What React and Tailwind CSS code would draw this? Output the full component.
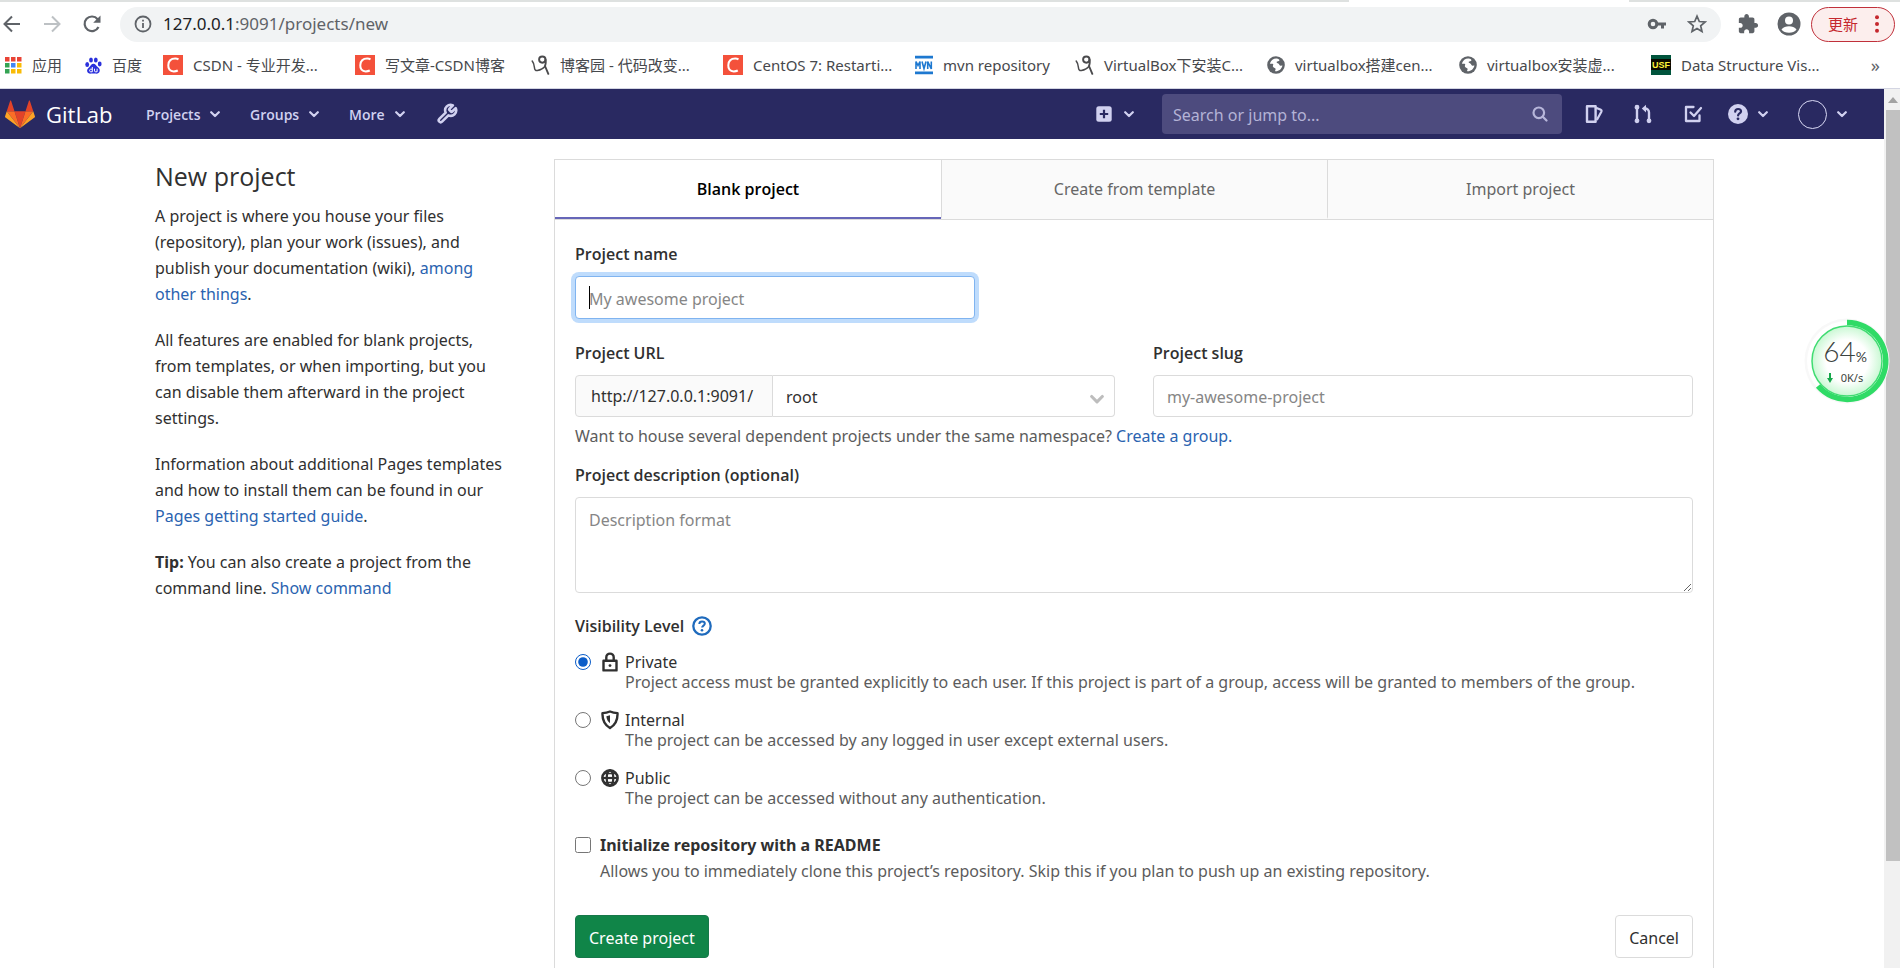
import React from "react";

function AppsIcon() {
  const colors = ["#e94335", "#e94335", "#e94335", "#34a353", "#4285f4", "#f9bb06", "#34a353", "#f9bb06", "#f9bb06"];
  return (
    <svg viewBox="0 0 17 17" className="h-[17px] w-[17px] shrink-0" aria-hidden="true">
      {colors.map((c, i) => (
        <rect key={i} x={(i % 3) * 6} y={Math.floor(i / 3) * 6} width="4.500" height="4.500" fill={c} />
      ))}
    </svg>
  );
}

function PawIcon() {
  return (
    <svg viewBox="0 0 17 17" className="h-[17px] w-[17px] shrink-0" fill="#2a30dc" aria-hidden="true">
      <ellipse cx="2.2" cy="7.4" rx="1.9" ry="2.5" />
      <ellipse cx="6" cy="3" rx="1.9" ry="2.6" />
      <ellipse cx="10.8" cy="3" rx="1.9" ry="2.6" />
      <ellipse cx="14.7" cy="7" rx="1.9" ry="2.4" />
      <path d="M8.4 6.8c2 0 2.5 1.6 4 3 1.700 1.500 2.600 2.400 2.300 4.300-.4 2.400-2.400 2.700-4.200 2.500-1.500-.1-2.700-.1-4.200 0-2 .2-3.900-.3-4.200-2.500-.2-1.900.9-2.900 2.400-4.200 1.500-1.400 1.900-3.100 3.900-3.100z" />
      <path d="M7.300 10v4.800H5.600q-1-.2-1-1.300t1-1.300h1.700M9.500 11.700v2.200q.1.900 1 .9h1.600v-3.100" fill="none" stroke="#fff" strokeWidth="1" />
    </svg>
  );
}

function CIcon() {
  return (
    <span aria-hidden="true" className="flex h-5 w-5 shrink-0 items-center justify-center bg-[#f4513b]">
      <svg viewBox="0 0 20 20" className="h-5 w-5" fill="none" stroke="#fff" strokeWidth="2">
        <path d="M15.500 4.400c-1-.6-2-.8-3.300-.8-4.400 0-6.700 2.800-6.900 6.600-.2 3.700 1.700 6.200 5.400 6.200 1.600 0 2.900-.3 4.100-.9" />
      </svg>
    </span>
  );
}

function BlogIcon() {
  return (
    <svg viewBox="0 0 19 20" className="h-5 w-[19px] shrink-0" fill="none" stroke="#4a4a4c" strokeLinecap="round" strokeLinejoin="round" aria-hidden="true">
      <path d="M1.200 6c1.500 1.800 2 3.800 2.200 6.200.2 2.600 1.200 3.600 3 3.300 3.400-.5 6.200-2.300 8-4.700" strokeWidth="1.500" />
      <ellipse cx="11.300" cy="4.600" rx="3.200" ry="3.100" strokeWidth="1.900" />
      <path d="M14.500 4.500c.5 2.500.3 4.500-.5 6.500l3.300 7.800" strokeWidth="1.900" />
    </svg>
  );
}

function MvnIcon() {
  return (
    <svg viewBox="0 0 18 20" className="h-5 w-[18px] shrink-0" aria-hidden="true">
      <path d="M0 2.200h18M0 17.800h18" stroke="#1d78d0" strokeWidth="2.800" />
      <path d="M1 14V6.500l2 4 2-4V14M7 6.500l2 7 2-7M12.700 14V6.500l3.600 7.500V6.500" fill="none" stroke="#1d78d0" strokeWidth="1.600" />
    </svg>
  );
}

function GlobeMark() {
  return (
    <svg viewBox="0 0 18 18" className="h-[18px] w-[18px] shrink-0" aria-hidden="true">
      <circle cx="9" cy="9" r="8.800" fill="#5f6368" />
      <path d="M8 2.200c2.300-.3 3.500.4 3.400 1.400-.2 1.200-2 1-2.400 2-.3.900.8 1.100 2 1.200 1.300.2 1.100 1.500 2.300 1.700.9.100 1.600-.2 2.500-.6.200 3.700-2 7-5.900 7.800-.9-.6.300-1.800-.3-2.700-.8-1.100-2.700-.6-3.400-1.700-.6-1 .5-1.900-.5-2.500-1-.5-2 .7-3.400.2.300-3.400 2.400-6.200 5.700-6.800z" fill="#fff" transform="rotate(14 9 9) translate(.5 .5) scale(.94)" />
    </svg>
  );
}

function UsfIcon() {
  return (
    <svg viewBox="0 0 20 20" className="h-5 w-5 shrink-0" aria-hidden="true">
      <rect width="20" height="20" fill="#00543c" />
      <rect y="4" width="20" height="11" fill="#0a0a00" />
      <text x="10" y="13" textAnchor="middle" fontFamily="Liberation Sans" fontSize="9" fontWeight="700" fill="#fff33a">USF</text>
    </svg>
  );
}

const bookmarks = [
  { label: "应用", icon: <AppsIcon />, w: "w-[80px]" },
  { label: "百度", icon: <PawIcon />, w: "w-[78px]" },
  { label: "CSDN - 专业开发...", icon: <CIcon />, w: "w-[192px]" },
  { label: "写文章-CSDN博客", icon: <CIcon />, w: "w-[176px]" },
  { label: "博客园 - 代码改变...", icon: <BlogIcon />, w: "w-[192px]" },
  { label: "CentOS 7: Restarti...", icon: <CIcon />, w: "w-[192px]" },
  { label: "mvn repository", icon: <MvnIcon />, w: "w-[160px]" },
  { label: "VirtualBox下安装C...", icon: <BlogIcon />, w: "w-[192px]" },
  { label: "virtualbox搭建cen...", icon: <GlobeMark />, w: "w-[192px]" },
  { label: "virtualbox安装虚...", icon: <GlobeMark />, w: "w-[192px]" },
  { label: "Data Structure Vis...", icon: <UsfIcon />, w: "w-[192px]" },
];

function BrowserBar() {
  return (
    <div className="border-b border-[#d3d5e2] bg-white pb-[2px] text-[#5f6368]">
      <div className="flex h-[2px] bg-[#dee1e0]">
        <div className="ml-[71%] w-[280px] bg-white" />
      </div>
      <div className="flex h-[42px] items-center pt-[2px]">
        <div className="flex w-[120px] shrink-0 items-center gap-5 pl-[2px]">
          <button type="button" aria-label="Back">
            <svg viewBox="0 0 20 20" className="h-5 w-5" fill="none" stroke="#5f6368" strokeWidth="2">
              <path d="M18 10H3M10 2.500L2.500 10l7.500 7.500" />
            </svg>
          </button>
          <button type="button" aria-label="Forward">
            <svg viewBox="0 0 20 20" className="h-5 w-5" fill="none" stroke="#bdc1c4" strokeWidth="2">
              <path d="M2 10h15M10 2.500l7.500 7.500-7.500 7.500" />
            </svg>
          </button>
          <button type="button" aria-label="Reload">
            <svg viewBox="0 0 20 20" className="h-5 w-5" fill="none" stroke="#5f6368" strokeWidth="2.200">
              <path d="M16.500 13A7.300 7.300 0 1 1 15.600 5.200" />
              <path d="M18.500 1.500v7.300h-7.300z" fill="#5f6368" stroke="none" />
            </svg>
          </button>
        </div>
        <div className="flex h-[35px] flex-1 items-center rounded-full bg-[#f1f3f4] pr-[14px] pl-[14px]">
          <svg viewBox="0 0 18 18" className="h-[18px] w-[18px] shrink-0" fill="none" stroke="#5f6368" strokeWidth="1.800" aria-hidden="true">
            <circle cx="9" cy="9" r="7.500" />
            <path d="M9 8v5M9 4.800v1.800" />
          </svg>
          <span className="ml-[11px] flex-1 text-[17px]">
            <span className="text-[#202124]">127.0.0.1</span>:9091/projects/new
          </span>
          <svg viewBox="0 0 20 14" className="mr-[20px] h-[14px] w-5" fill="none" stroke="#5f6368" strokeWidth="3" aria-hidden="true">
            <circle cx="6" cy="7" r="3.800" />
            <path d="M10 7h9M15.500 7v4.500" />
          </svg>
          <svg viewBox="0 0 20 20" className="h-5 w-5" fill="none" stroke="#5f6368" strokeWidth="1.700" aria-hidden="true">
            <path d="M10 2.200l2.300 5.300 5.800.5-4.400 3.800 1.300 5.700-5-3-5 3 1.300-5.700-4.400-3.800 5.800-.5z" />
          </svg>
        </div>
        <div className="flex shrink-0 items-center gap-[18px] pr-[5px] pl-[16px]">
          <svg viewBox="0 0 24 24" className="h-[22px] w-[22px]" fill="#5f6368" aria-hidden="true">
            <path d="M20.500 11H19V7c0-1.100-.9-2-2-2h-4V3.500C13 2.120 11.880 1 10.500 1S8 2.120 8 3.500V5H4c-1.100 0-1.990.9-1.990 2v3.800H3.500c1.490 0 2.700 1.210 2.700 2.700s-1.210 2.700-2.700 2.700H2V20c0 1.100.9 2 2 2h3.800v-1.500c0-1.490 1.210-2.700 2.700-2.700 1.490 0 2.700 1.210 2.700 2.700V22H17c1.100 0 2-.9 2-2v-4h1.500c1.380 0 2.500-1.120 2.500-2.500S21.880 11 20.500 11z" />
          </svg>
          <svg viewBox="0 0 24 24" className="h-6 w-6" aria-hidden="true">
            <circle cx="12" cy="12" r="11.500" fill="#5f6368" />
            <circle cx="12" cy="8.500" r="4" fill="#fff" />
            <path d="M4.500 17.500c1.600-2.300 4.500-3.300 7.500-3.300s5.900 1 7.500 3.300c-1.600 2.200-4.300 3.300-7.500 3.300s-5.900-1.100-7.500-3.300z" fill="#fff" />
          </svg>
          <button type="button" className="-ml-2 flex h-[35px] w-[84px] items-center justify-between rounded-full border border-[#c0303a] bg-[#fceeed] pr-[15px] pl-[16px] text-[15px] text-[#c5282e]">
            更新
            <svg viewBox="0 0 4 18" className="h-[18px] w-1" fill="#c5282e" aria-hidden="true">
              <circle cx="2" cy="2.200" r="2" />
              <circle cx="2" cy="9" r="2" />
              <circle cx="2" cy="15.800" r="2" />
            </svg>
          </button>
        </div>
      </div>
      <nav aria-label="Bookmarks" className="flex h-[42px] items-center pr-5 pl-[5px]">
        {bookmarks.map((b) => (
          <a key={b.label} href="#" className={`flex shrink-0 items-center gap-[10px] text-[15px] whitespace-nowrap text-[#46484c] ${b.w}`}>
            {b.icon}
            <span>{b.label}</span>
          </a>
        ))}
        <span className="ml-auto text-[18px] leading-5">»</span>
      </nav>
    </div>
  );
}

function Chevron({ className = "h-[10px] w-[10px]" }) {
  return (
    <svg viewBox="0 0 10 10" className={className} fill="none" stroke="currentColor" strokeWidth="2.200" strokeLinecap="round" strokeLinejoin="round" aria-hidden="true">
      <path d="M1.200 3.200L5 7l3.800-3.800" />
    </svg>
  );
}

function HeaderNav() {
  return (
    <header className="flex h-[50px] items-center bg-[#292961] pr-[37px] pl-[5px] text-[#d1d1f0]">
      <a href="#" className="flex w-[141px] items-center gap-[11px] font-['Open_Sans'] text-[22px] text-white">
        <svg viewBox="0 0 36 34" className="h-[29px] w-[30px]" aria-hidden="true">
          <path fill="#e24329" d="M18 33.500L24.600 13H11.400z" />
          <path fill="#fc6d26" d="M18 33.500L11.400 13H2.100z" />
          <path fill="#fca326" d="M2.100 13L.1 19.200c-.2.600 0 1.200.5 1.500L18 33.500z" />
          <path fill="#e24329" d="M2.100 13h9.300L7.400.8C7.200.1 6.300.1 6.100.8z" />
          <path fill="#fc6d26" d="M18 33.500L24.600 13h9.300z" />
          <path fill="#fca326" d="M33.900 13l2 6.200c.2.600 0 1.200-.5 1.500L18 33.500z" />
          <path fill="#e24329" d="M33.900 13h-9.300l4-12.200c.2-.7 1.100-.7 1.300 0z" />
        </svg>
        GitLab
      </a>
      <nav aria-label="Main" className="flex items-center font-['Open_Sans'] text-[14px] font-semibold">
        <button type="button" className="flex w-[104px] items-center gap-[10px]">Projects <Chevron /></button>
        <button type="button" className="flex w-[99px] items-center gap-[10px]">Groups <Chevron /></button>
        <button type="button" className="flex w-[87px] items-center gap-[10px]">More <Chevron /></button>
        <button type="button" aria-label="Admin Area">
          <svg viewBox="0 0 24 24" className="h-[22px] w-[22px]" fill="none" stroke="currentColor" strokeWidth="2.800" strokeLinejoin="round">
            <path d="M14.700 6.300a1 1 0 0 0 0 1.400l1.600 1.600a1 1 0 0 0 1.400 0l3.770-3.770a6 6 0 0 1-7.940 7.940l-6.910 6.910a2.120 2.120 0 0 1-3-3l6.910-6.910a6 6 0 0 1 7.940-7.940z" />
          </svg>
        </button>
      </nav>
      <div className="ml-auto flex items-center">
        <button type="button" aria-label="New" className="mr-7 flex items-center gap-3">
          <svg viewBox="0 0 16 16" className="h-4 w-4" aria-hidden="true">
            <rect x=".3" y=".3" width="15.400" height="15.400" rx="2.500" fill="currentColor" />
            <path d="M8 3.800v8.400M3.800 8h8.400" stroke="#292961" strokeWidth="2.200" />
          </svg>
          <Chevron />
        </button>
        <label className="flex h-10 w-[400px] items-center rounded bg-[#4d4b7e] pr-[14px] pl-[11px]">
          <input aria-label="Search or jump to" placeholder="Search or jump to..." className="min-w-0 flex-1 bg-transparent pt-[2px] text-base outline-none placeholder:text-[#b4b3d6]" />
          <svg viewBox="0 0 16 16" className="h-4 w-4" fill="none" stroke="#b7b6da" strokeWidth="2.200" strokeLinecap="round" aria-hidden="true">
            <circle cx="6.800" cy="6.800" r="5.300" />
            <path d="M10.800 10.800l3.700 3.700" />
          </svg>
        </label>
        <a href="#" aria-label="Issues" className="ml-[22px]">
          <svg viewBox="0 0 20 20" className="h-5 w-5" fill="none" stroke="currentColor" strokeWidth="2.400" strokeLinejoin="round">
            <path d="M3 2.200h8.600v15.600H3z" />
            <path d="M12 3.700l4.800 2.100c.8.400 1 1 .7 1.700l-4.700 8.500" strokeWidth="2.200" />
          </svg>
        </a>
        <a href="#" aria-label="Merge requests" className="ml-[29px]">
          <svg viewBox="0 0 20 20" className="h-5 w-5" fill="none" stroke="currentColor" strokeWidth="2.400">
            <path d="M4 3v14M16 17V8.500c0-2.600-1.500-4-4.500-4" />
            <circle cx="4" cy="3.200" r="1.800" fill="currentColor" strokeWidth="1.200" />
            <circle cx="4" cy="16.800" r="1.800" fill="currentColor" strokeWidth="1.200" />
            <circle cx="16" cy="16.800" r="1.800" fill="currentColor" strokeWidth="1.200" />
            <path d="M13 .8v7.600L8.800 4.600z" fill="currentColor" stroke="none" />
          </svg>
        </a>
        <a href="#" aria-label="To-Do List" className="ml-[30px]">
          <svg viewBox="0 0 20 20" className="h-5 w-5" fill="none" stroke="currentColor" strokeWidth="2.300" strokeLinecap="round" strokeLinejoin="round">
            <path d="M10.500 3H3v14h13.500v-5.500" />
            <path d="M7.500 8.500l3.500 3.500 7-8" />
          </svg>
        </a>
        <button type="button" aria-label="Help" className="ml-[25px] flex items-center gap-[10px]">
          <svg viewBox="0 0 20 20" className="h-5 w-5" aria-hidden="true">
            <circle cx="10" cy="10" r="10" fill="currentColor" />
            <path d="M7.200 7.700C7.300 6 8.500 5 10.100 5c1.700 0 2.900.9 2.900 2.400 0 2-2.900 2.100-2.900 4" fill="none" stroke="#292961" strokeWidth="2.200" strokeLinecap="round" />
            <circle cx="10" cy="14.800" r="1.400" fill="#292961" />
          </svg>
          <Chevron />
        </button>
        <button type="button" aria-label="Account" className="ml-[30px] flex items-center gap-[10px]">
          <span className="h-[29px] w-[29px] rounded-full border border-[#d8d8f4]" />
          <Chevron />
        </button>
      </div>
    </header>
  );
}

function Link({ children }) {
  return <a href="#" className="text-[#2a63b0]">{children}</a>;
}

function Sidebar() {
  return (
    <aside className="w-[399px] shrink-0 pr-11 text-base leading-[26px]">
      <h1 className="mb-[10px] font-['Open_Sans'] text-[25px] leading-[34px] font-medium">New project</h1>
      <div className="space-y-5">
        <p>
          A project is where you house your files (repository), plan your work (issues), and publish your documentation (wiki), <Link>among other things</Link>.
        </p>
        <p>
          All features are enabled for blank projects, from templates, or when importing, but you can disable them afterward in the project settings.
        </p>
        <p>
          Information about additional Pages templates and how to install them can be found in our <Link>Pages getting started guide</Link>.
        </p>
        <p>
          <b>Tip:</b> You can also create a project from the command line. <Link>Show command</Link>
        </p>
      </div>
    </aside>
  );
}

function LockIcon() {
  return (
    <svg viewBox="0 0 16 20" className="h-5 w-4" fill="none" stroke="#303030" strokeWidth="2.400" aria-hidden="true">
      <path d="M1.500 8.800h13v9.600h-13z" strokeLinejoin="round" />
      <path d="M4.300 8.500V5.300a3.700 3.700 0 0 1 7.400 0v3.200" />
      <circle cx="8" cy="13.600" r="1.400" fill="#303030" stroke="none" />
    </svg>
  );
}

function ShieldIcon() {
  return (
    <svg viewBox="0 0 18 20" className="h-5 w-[18px]" aria-hidden="true">
      <path d="M9 1.500c2.300 1 4.700 1.500 7.500 1.600.3 6.400-2 11.600-7.500 15-5.500-3.400-7.800-8.600-7.500-15C4.300 3 6.700 2.500 9 1.500z" fill="none" stroke="#303030" strokeWidth="2.400" strokeLinejoin="round" />
      <path d="M9 5.200v8C6.700 11.400 5.500 9 5.400 6.200z" fill="#303030" />
    </svg>
  );
}

function EarthIcon() {
  return (
    <svg viewBox="0 0 18 18" className="h-[18px] w-[18px]" fill="none" stroke="#303030" strokeWidth="2.600" aria-hidden="true">
      <circle cx="9" cy="9" r="7.600" />
      <ellipse cx="9" cy="9" rx="3.300" ry="7.600" strokeWidth="2.200" />
      <path d="M1.500 9h15" strokeWidth="2.200" />
      <path d="M3 4.500h12M3 13.500h12" strokeWidth="1.600" />
    </svg>
  );
}

const levels = [
  { id: "private", name: "Private", icon: <LockIcon />, text: "Project access must be granted explicitly to each user. If this project is part of a group, access will be granted to members of the group." },
  { id: "internal", name: "Internal", icon: <ShieldIcon />, text: "The project can be accessed by any logged in user except external users." },
  { id: "public", name: "Public", icon: <EarthIcon />, text: "The project can be accessed without any authentication." },
];

const labelClass = "block font-['Open_Sans'] leading-[26px] font-semibold";
const boxClass = "rounded border border-[#dbdbdb] bg-white placeholder:text-[#868686] outline-none";

function ProjectForm() {
  return (
    <form className="px-5 pt-[21px] pb-10">
      <label htmlFor="name" className={labelClass}>Project name</label>
      <div className="relative mt-[9px] max-w-[400px]">
        <input id="name" placeholder="My awesome project" className="h-[43px] w-full rounded border border-[#80b4f0] bg-white px-[13px] pt-[2px] ring-4 ring-[#bfdcfc] outline-none placeholder:text-[#868686]" />
        <span aria-hidden="true" className="absolute top-[10px] left-[14px] h-[23px] w-px bg-black" />
      </div>

      <div className="mt-[21px] grid grid-cols-2 gap-[38px]">
        <div>
          <label htmlFor="namespace" className={labelClass}>Project URL</label>
          <div className="relative mt-[9px] flex h-[42px]">
            <span className="flex w-[198px] items-center rounded-l border border-[#dbdbdb] bg-[#fafafa] pl-[15px]">http://127.0.0.1:9091/</span>
            <select id="namespace" className="min-w-0 flex-1 appearance-none rounded-r border border-l-0 border-[#dbdbdb] bg-white px-[13px] pt-[2px] outline-none">
              <option>root</option>
            </select>
            <Chevron className="pointer-events-none absolute top-[17px] right-[11px] h-[14px] w-[14px] text-[#bdbdbd]" />
          </div>
        </div>
        <div>
          <label htmlFor="slug" className={labelClass}>Project slug</label>
          <input id="slug" placeholder="my-awesome-project" className={`mt-[9px] h-[42px] w-full px-[13px] pt-[2px] ${boxClass}`} />
        </div>
      </div>
      <p className="mt-[6px] leading-[26px] text-[#5c5c5c]">
        Want to house several dependent projects under the same namespace? <Link>Create a group.</Link>
      </p>

      <label htmlFor="description" className={`mt-[13px] ${labelClass}`}>Project description (optional)</label>
      <textarea id="description" placeholder="Description format" className={`mt-[9px] block h-24 w-full resize-y px-[13px] py-[9px] leading-[26px] ${boxClass}`} />

      <fieldset className="mt-5">
        <legend className="flex items-center gap-2 font-['Open_Sans'] leading-[26px] font-semibold">
          Visibility Level
          <a href="#" aria-label="Visibility help">
            <svg viewBox="0 0 20 20" className="h-5 w-5" fill="none" stroke="#1f6bbd" strokeWidth="2.300">
              <circle cx="10" cy="10" r="8.700" />
              <path d="M7.300 8c.1-1.700 1.200-2.500 2.700-2.500 1.700 0 2.800.8 2.800 2.200 0 1.800-2.700 2-2.700 3.900" strokeWidth="2" />
              <circle cx="10" cy="14.300" r="1.300" fill="#1f6bbd" stroke="none" />
            </svg>
          </a>
        </legend>
        <div className="mt-[13px] space-y-[18px]">
          {levels.map((l, i) => (
            <div key={l.id} className="grid grid-cols-[26px_24px_1fr] leading-5">
              <input type="radio" id={l.id} name="visibility" defaultChecked={i === 0} className="m-0 h-4 w-4 self-center accent-[#0a5cc8]" />
              <span className="flex h-5 w-[18px] items-center justify-center self-center">{l.icon}</span>
              <label htmlFor={l.id}>{l.name}</label>
              <p className="col-start-3 text-[#5c5c5c]">{l.text}</p>
            </div>
          ))}
        </div>
      </fieldset>

      <div className="mt-6 grid grid-cols-[25px_1fr] leading-[26px]">
        <input type="checkbox" id="readme" className="m-0 h-4 w-4 self-center" />
        <label htmlFor="readme" className="font-bold">Initialize repository with a README</label>
        <p className="col-start-2 text-[#5c5c5c]">
          Allows you to immediately clone this project’s repository. Skip this if you plan to push up an existing repository.
        </p>
      </div>

      <div className="mt-[31px] flex justify-between">
        <button type="button" className="h-[43px] rounded border border-[#17784a] bg-[#108548] px-[13px] pt-[2px] text-white">Create project</button>
        <button type="button" className="h-[43px] rounded border border-[#dbdbdb] bg-white px-[13px] pt-[2px]">Cancel</button>
      </div>
    </form>
  );
}

function ProjectCard() {
  return (
    <section className="min-w-0 flex-1 border border-b-0 border-[#dbdbdb]">
      <div role="tablist" className="grid h-[60px] grid-cols-3 border-b border-[#dbdbdb]">
        <button type="button" role="tab" aria-selected="true" className="border-b-2 border-[#6666b8] bg-white font-['Open_Sans'] font-semibold text-black">Blank project</button>
        <button type="button" role="tab" aria-selected="false" className="border-b-2 border-l border-b-[#fafafa] border-l-[#dbdbdb] bg-[#fafafa] text-[#666]">Create from template</button>
        <button type="button" role="tab" aria-selected="false" className="border-b-2 border-l border-b-[#fafafa] border-l-[#dbdbdb] bg-[#fafafa] text-[#666]">Import project</button>
      </div>
      <ProjectForm />
    </section>
  );
}

function SpeedBadge() {
  return (
    <div className="absolute top-[318px] right-[10px] flex h-[86px] w-[86px] flex-col items-center justify-center font-[Lato] text-[#3c4440]">
      <svg viewBox="0 0 86 86" className="absolute inset-0" aria-hidden="true">
        <defs>
          <radialGradient id="fill">
            <stop offset="0.600" stopColor="#fff" />
            <stop offset="1" stopColor="#c9f8d3" />
          </radialGradient>
        </defs>
        <circle cx="43" cy="43" r="42.500" fill="#f8f8f8" />
        <circle cx="43" cy="43" r="40" fill="#fff" />
        <circle cx="43" cy="43" r="35" fill="url(#fill)" stroke="#40dc72" strokeWidth="1.500" />
        <path d="M43 4.500a38.500 38.500 0 1 1-29 63.500" fill="none" stroke="#2fdb66" strokeWidth="5.500" />
      </svg>
      <div className="relative flex items-baseline pr-1 text-[28px] leading-7">
        <span className="font-light">64</span>
        <span className="text-[14px]">%</span>
      </div>
      <div className="relative flex items-center gap-2 pr-1 font-['Noto_Sans'] text-[11px] leading-[14px]">
        <svg viewBox="0 0 6 10" className="h-[10px] w-[6px]" fill="#17a84c" aria-hidden="true">
          <path d="M2 0h2v5h2L3 10 0 5h2z" />
        </svg>
        0K/s
      </div>
    </div>
  );
}

export default function App() {
  return (
    <div className="relative flex h-screen flex-col overflow-hidden bg-white font-['Noto_Sans','Noto_Sans_CJK_SC',sans-serif] text-base text-[#303030]">
      <BrowserBar />
      <div className="flex min-h-0 flex-1">
        <div className="min-w-0 flex-1 overflow-hidden">
          <HeaderNav />
          <main className="mx-auto flex max-w-[1600px] pt-5 pr-7 pl-[13px]">
            <Sidebar />
            <ProjectCard />
          </main>
        </div>
        <div aria-hidden="true" className="flex w-4 shrink-0 flex-col bg-[#f1f1f1] pl-[2px]">
          <div className="flex h-[21px] items-center justify-center">
            <svg viewBox="0 0 10 6" className="h-[6px] w-[10px]" fill="#a3a3a3">
              <path d="M5 0l5 6H0z" />
            </svg>
          </div>
          <div className="flex-[7] bg-[#c1c1c1]" />
          <div className="flex-1" />
        </div>
      </div>
      <SpeedBadge />
    </div>
  );
}
